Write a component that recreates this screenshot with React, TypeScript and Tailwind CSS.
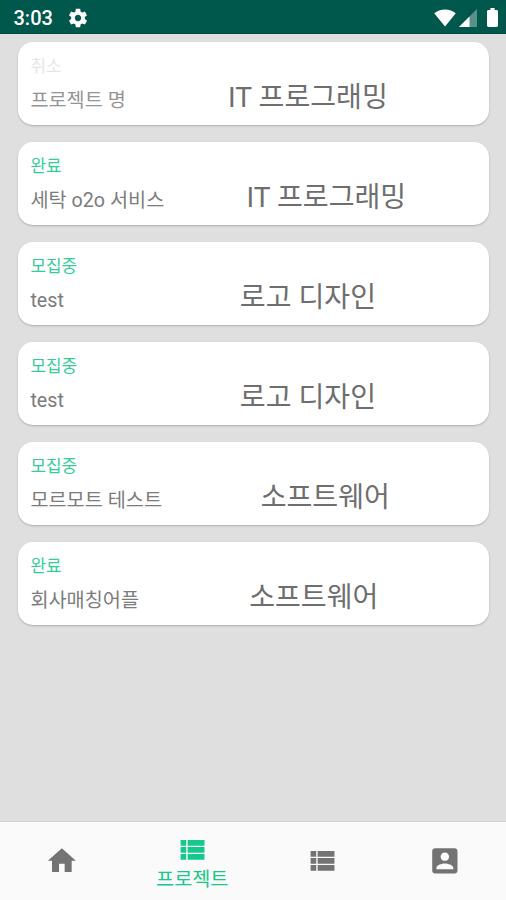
import clsx from "clsx";

interface Project {
  id: number;
  status: "취소" | "완료" | "모집중";
  title: string;
  category: string;
}

const projects: Project[] = [
  { id: 1, status: "취소", title: "프로젝트 명", category: "IT 프로그래밍" },
  { id: 2, status: "완료", title: "세탁 o2o 서비스", category: "IT 프로그래밍" },
  { id: 3, status: "모집중", title: "test", category: "로고 디자인" },
  { id: 4, status: "모집중", title: "test", category: "로고 디자인" },
  { id: 5, status: "모집중", title: "모르모트 테스트", category: "소프트웨어" },
  { id: 6, status: "완료", title: "회사매칭어플", category: "소프트웨어" },
];

const icons = {
  home: "M10 20v-6h4v6h5v-8h3L12 3 2 12h3v8z",
  list: "M4 14h4v-4H4v4zm0 5h4v-4H4v4zM4 9h4V5H4v4zm5 5h12v-4H9v4zm0 5h12v-4H9v4zM9 5v4h12V5H9z",
  account:
    "M3 5v14c0 1.1.89 2 2 2h14c1.1 0 2-.9 2-2V5c0-1.1-.9-2-2-2H5c-1.11 0-2 .9-2 2zm12 4c0 1.66-1.34 3-3 3s-3-1.34-3-3 1.34-3 3-3 3 1.34 3 3zm-9 8c0-2 4-3.1 6-3.1s6 1.1 6 3.1v1H6v-1z",
  settings:
    "M19.43 12.98c.04-.32.07-.64.07-.98s-.03-.66-.07-.98l2.11-1.65c.19-.15.24-.42.12-.64l-2-3.46c-.12-.22-.39-.3-.61-.22l-2.49 1c-.52-.4-1.08-.73-1.69-.98l-.38-2.65C14.46 2.18 14.25 2 14 2h-4c-.25 0-.46.18-.49.42l-.38 2.65c-.61.25-1.17.59-1.69.98l-2.49-1c-.23-.09-.49 0-.61.22l-2 3.46c-.13.22-.07.49.12.64l2.11 1.65c-.04.32-.07.65-.07.98s.03.66.07.98l-2.11 1.65c-.19.15-.24.42-.12.64l2 3.46c.12.22.39.3.61.22l2.49-1c.52.4 1.08.73 1.69.98l.38 2.65c.03.24.24.42.49.42h4c.25 0 .46-.18.49-.42l.38-2.65c.61-.25 1.17-.59 1.69-.98l2.49 1c.23.09.49 0 .61-.22l2-3.46c.12-.22.07-.49-.12-.64l-2.11-1.65zM12 15.5c-1.93 0-3.5-1.57-3.5-3.5s1.57-3.5 3.5-3.5 3.5 1.57 3.5 3.5-1.57 3.5-3.5 3.5z",
};

function Icon({ name, className }: { name: keyof typeof icons; className?: string }) {
  return (
    <svg viewBox="0 0 24 24" fill="currentColor" className={className}>
      <path d={icons[name]} />
    </svg>
  );
}

function StatusBar() {
  return (
    <header className="flex h-[34px] shrink-0 items-center border-b border-[#004a40] bg-[#00574b] pt-0.5 pr-2 pl-[13.5px] text-white">
      <span className="w-[53.5px] text-[20px] leading-none font-medium">3:03</span>
      <Icon name="settings" className="size-[22px]" />
      <div className="ml-auto flex items-center">
        <svg viewBox="0 0 22 18" fill="currentColor" className="mr-[3px] h-[18px] w-[22px]">
          <path d="M11 17.5.2 4.2C3.2 1.9 6.9.5 11 .5s7.8 1.4 10.8 3.7z" />
        </svg>
        <svg viewBox="0 0 18 18" fill="currentColor" className="mr-[10px] size-[18px]">
          <path d="M0 18 18 0v18z" opacity=".35" />
          <path d="M0 18 10.5 7.5V18z" />
        </svg>
        <svg viewBox="0 0 12 20" fill="currentColor" className="h-[19px] w-[11px]" preserveAspectRatio="none">
          <path d="M3.7 0h4.6v2h2.2c.8 0 1.5.7 1.5 1.5v15c0 .8-.7 1.5-1.5 1.5h-9C.7 20 0 19.3 0 18.5v-15C0 2.7.7 2 1.5 2h2.2z" />
        </svg>
      </div>
    </header>
  );
}

function ProjectCard({ status, title, category }: Omit<Project, "id">) {
  const canceled = status === "취소";

  return (
    <li className="flex h-[83px] flex-col rounded-[15px] bg-white pl-3 shadow-[0_1px_2px_rgba(0,0,0,0.22)]">
      <span
        className={clsx(
          "mt-3 text-[16.9px] leading-6",
          canceled ? "text-[#e6e6e6]" : "text-[#35cc99]",
        )}
      >
        {status}
      </span>
      <div className="mt-0.5 flex h-9 items-center">
        <span
          className={clsx(
            "min-w-[97px] pt-[5px] text-[19.7px] leading-6 whitespace-nowrap",
            canceled ? "text-[#959595]" : "text-[#7c7c7c]",
          )}
        >
          {title}
        </span>
        <span className="flex-1 text-center text-[28.1px] leading-9 whitespace-nowrap text-[#6e6e6e]">
          {category}
        </span>
      </div>
    </li>
  );
}

function BottomNav() {
  return (
    <nav className="grid h-[79px] shrink-0 grid-cols-[124.5px_1fr_123.5px_122.5px] border-t border-[#d2d2d2] bg-[#fafafa] text-[#737373]">
      <button className="flex items-center justify-center">
        <Icon name="home" className="size-[33.7px]" />
      </button>
      <button className="flex flex-col items-center pt-[11px] text-[#14c98b]">
        <Icon name="list" className="size-[33.7px]" />
        <span className="mt-px text-[19.7px] leading-6">프로젝트</span>
      </button>
      <button className="flex items-center justify-center">
        <Icon name="list" className="size-[33.7px]" />
      </button>
      <button className="flex items-center justify-center">
        <Icon name="account" className="size-[33.7px]" />
      </button>
    </nav>
  );
}

export default function App() {
  return (
    <div className="flex h-[900px] w-[506px] flex-col overflow-hidden bg-[#dfdfdf] font-[Roboto,'Noto_Sans_CJK_KR',sans-serif]">
      <StatusBar />
      <main className="flex-1 pt-2 pr-[17.5px] pl-[18.4px]">
        <ul className="flex flex-col gap-[17px]">
          {projects.map(({ id, ...project }) => (
            <ProjectCard key={id} {...project} />
          ))}
        </ul>
      </main>
      <BottomNav />
    </div>
  );
}
